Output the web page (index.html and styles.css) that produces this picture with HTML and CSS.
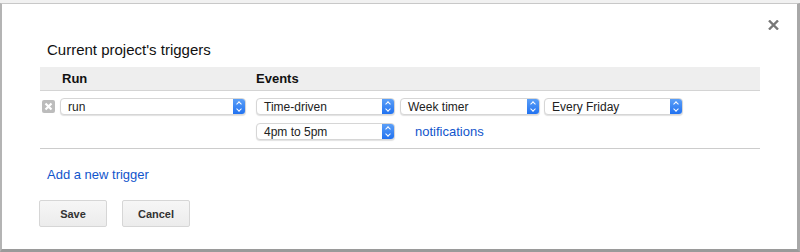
FILE: index.html
```html
<!DOCTYPE html>
<html lang="en">
<head>
    <meta charset="UTF-8">
    <title>Current project's triggers</title>
    <link rel="stylesheet" href="styles.css">
</head>
<body>
    <div class="backdrop">
        <div class="backdrop-text">null.</div>
    </div>

    <div class="dialog">
        <div class="dialog-top">
            <svg class="close" width="11" height="10" viewBox="0 0 11 10">
                <path d="M1 0.5 L10 9.5 M10 0.5 L1 9.5" stroke="#777" stroke-width="2.4"/>
            </svg>
        </div>
        <h2 class="title">Current project's triggers</h2>

        <div class="triggers">
            <div class="triggers-head">
                <div class="col-run">Run</div>
                <div class="col-events">Events</div>
            </div>
            <div class="triggers-body">
                <div class="trigger-row">
                    <div class="row-first">
                        <span class="delete">
                            <svg width="13" height="13" viewBox="0 0 13 13">
                                <path d="M3.5 3.5 L9.5 9.5 M9.5 3.5 L3.5 9.5" stroke="#fff" stroke-width="2.2"/>
                            </svg>
                        </span>
                        <div class="select select-run"><span>run</span><i class="arrows"></i></div>
                    </div>
                    <div class="col-events events">
                        <div class="events-line">
                            <div class="select"><span>Time-driven</span><i class="arrows"></i></div>
                            <div class="select sel-week"><span>Week timer</span><i class="arrows"></i></div>
                            <div class="select sel-day"><span>Every Friday</span><i class="arrows"></i></div>
                        </div>
                        <div class="events-line">
                            <div class="select"><span>4pm to 5pm</span><i class="arrows"></i></div>
                            <a class="link notif" href="#">notifications</a>
                        </div>
                    </div>
                </div>
            </div>
        </div>

        <a class="link add" href="#">Add a new trigger</a>

        <div class="buttons">
            <button>Save</button>
            <button>Cancel</button>
        </div>
    </div>
</body>
</html>
```

FILE: styles.css
```css
body {
    margin: 0;
    padding: 0;
    background-color: #f1f1f1;
    font-family: Arial, "Liberation Sans", sans-serif;
    width: 800px;
    height: 252px;
    overflow: hidden;
}

.backdrop {
    height: 3px;
    overflow: hidden;
    padding-left: 2px;
}

.backdrop-text {
    margin-top: -9px;
    font-family: "Liberation Mono", monospace;
    font-size: 13px;
    line-height: 12px;
    color: #2a2aa8;
}

.dialog {
    box-sizing: border-box;
    height: 249px;
    background: white;
    border-top: 1px solid #c8c8c8;
    border-left: 2px solid #b4b4b4;
    border-right: 3px solid #a8a8a8;
    border-bottom: 3px solid #9a9a9a;
    padding: 0 0 0 38px;
}

.dialog-top {
    display: flex;
    justify-content: flex-end;
    height: 16px;
    padding: 16px 18px 0 0;
}

.title {
    margin: 5px 0 0 7px;
    font-size: 15px;
    font-weight: normal;
    color: #111;
    line-height: 18px;
}

.triggers {
    margin-top: 8px;
    width: 720px;
    border-bottom: 1px solid #ccc;
}

.triggers-head {
    display: flex;
    height: 23px;
    background: #eee;
    border-bottom: 1px solid #d4d4d4;
    font-weight: bold;
    font-size: 13px;
    line-height: 23px;
    color: #111;
}

.col-run {
    box-sizing: border-box;
    width: 216px;
    padding-left: 22px;
    flex-shrink: 0;
}

.col-events {
    flex: 1;
}

.trigger-row {
    display: flex;
    padding: 7px 0 8px;
}

.row-first {
    box-sizing: border-box;
    display: flex;
    align-items: center;
    align-self: flex-start;
    flex-shrink: 0;
    padding-left: 2px;
    width: 216px;
    gap: 5px;
}

.delete {
    display: flex;
    width: 13px;
    height: 13px;
    background: #bcbcbc;
    border-radius: 2px;
}

.events {
    display: flex;
    flex-direction: column;
    gap: 8px;
}

.events-line {
    display: flex;
    align-items: center;
    gap: 5px;
}

.select {
    box-sizing: border-box;
    display: flex;
    align-items: center;
    width: 139px;
    height: 17px;
    background: white;
    border: 1px solid #d6d6d6;
    border-radius: 4px;
    box-shadow: 0 1px 1px rgba(0, 0, 0, 0.12);
    font-size: 12px;
    color: #222;
    overflow: hidden;
}

.select span {
    flex: 1;
    padding-left: 7px;
}

.select-run {
    width: 186px;
}

.sel-week {
    width: 140px;
}

.sel-day {
    margin-left: -1px;
}

.arrows {
    position: relative;
    width: 13px;
    height: 17px;
    margin-right: -1px;
    background: linear-gradient(#5fa2f8, #1d6ff0);
}

.arrows::before,
.arrows::after {
    content: "";
    position: absolute;
    left: 4px;
    width: 3px;
    height: 3px;
    border-left: 1.3px solid white;
    border-top: 1.3px solid white;
}

.arrows::before {
    top: 4px;
    transform: rotate(45deg);
}

.arrows::after {
    top: 9px;
    transform: rotate(225deg);
}

.link {
    color: #1155cc;
    text-decoration: none;
    font-size: 13px;
}

.notif {
    margin-left: 15px;
}

.add {
    display: block;
    margin: 18px 0 0 7px;
    line-height: 16px;
}

.buttons {
    display: flex;
    gap: 15px;
    margin: 17px 0 0 -1px;
}

.buttons button {
    width: 68px;
    height: 27px;
    background: linear-gradient(#f6f6f6, #ececec);
    border: 1px solid #d6d6d6;
    border-radius: 2px;
    font-family: Arial, "Liberation Sans", sans-serif;
    font-weight: bold;
    font-size: 11px;
    color: #333;
    cursor: pointer;
}
```
